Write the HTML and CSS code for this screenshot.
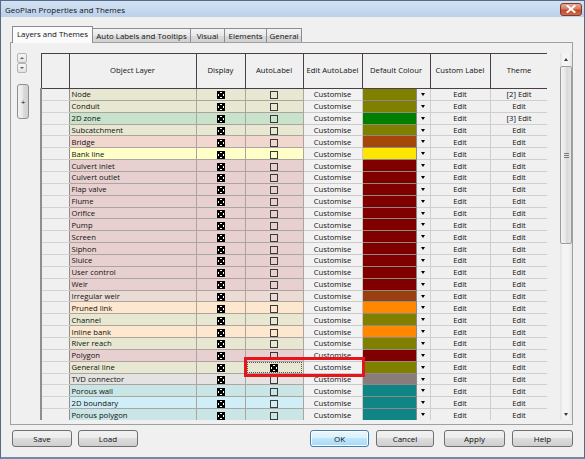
FILE: index.html
```html
<!DOCTYPE html>
<html>
<head>
<meta charset="utf-8">
<title>GeoPlan Properties and Themes</title>
<link rel="stylesheet" href="styles.css">
</head>
<body>
<div class="window">
  <div class="titlebar">
    <span class="title">GeoPlan Properties and Themes</span>
    <span class="close"><svg width="10" height="8" viewBox="0 0 10 8"><path d="M1.5 1 L8.5 7 M8.5 1 L1.5 7" stroke="#fff" stroke-width="2" stroke-linecap="square"/></svg></span>
  </div>
  <div class="tabs">
    <div class="tab active w1">Layers and Themes</div>
    <div class="tab w2">Auto Labels and Tooltips</div>
    <div class="tab w3">Visual</div>
    <div class="tab w4">Elements</div>
    <div class="tab w5">General</div>
  </div>
  <div class="panel">
    <div class="side">
      <div class="spin up"><i class="tri-up"></i></div>
      <div class="spin down"><i class="tri-down"></i></div>
      <div class="plus">+</div>
    </div>
    <div class="gridwrap">
      <div class="gridclip">
        <table class="grid">
          <colgroup>
            <col class="c-rh"><col class="c-nm"><col class="c-dp"><col class="c-al"><col class="c-cu"><col class="c-sw"><col class="c-dd"><col class="c-ed"><col class="c-th">
          </colgroup>
          <thead>
            <tr class="hd"><th></th><th>Object Layer</th><th>Display</th><th>AutoLabel</th><th>Edit AutoLabel</th><th colspan="2">Default Colour</th><th>Custom Label</th><th>Theme</th></tr>
          </thead>
          <tbody>
            <tr class="t-olive"><td class="rh"></td><td class="nm">Node</td><td class="ck"><i class="cb on"></i></td><td class="ck"><i class="cb"></i></td><td class="cu">Customise</td><td class="sw s-olive"></td><td class="dd"><i class="arr"></i></td><td class="ed">Edit</td><td class="ed">[2] Edit</td></tr>
            <tr class="t-olive"><td class="rh"></td><td class="nm">Conduit</td><td class="ck"><i class="cb on"></i></td><td class="ck"><i class="cb"></i></td><td class="cu">Customise</td><td class="sw s-olive"></td><td class="dd"><i class="arr"></i></td><td class="ed">Edit</td><td class="ed">Edit</td></tr>
            <tr class="t-green"><td class="rh"></td><td class="nm">2D zone</td><td class="ck"><i class="cb on"></i></td><td class="ck"><i class="cb"></i></td><td class="cu">Customise</td><td class="sw s-green"></td><td class="dd"><i class="arr"></i></td><td class="ed">Edit</td><td class="ed">[3] Edit</td></tr>
            <tr class="t-olive"><td class="rh"></td><td class="nm">Subcatchment</td><td class="ck"><i class="cb on"></i></td><td class="ck"><i class="cb"></i></td><td class="cu">Customise</td><td class="sw s-olive"></td><td class="dd"><i class="arr"></i></td><td class="ed">Edit</td><td class="ed">Edit</td></tr>
            <tr class="t-bridge"><td class="rh"></td><td class="nm">Bridge</td><td class="ck"><i class="cb on"></i></td><td class="ck"><i class="cb"></i></td><td class="cu">Customise</td><td class="sw s-brown"></td><td class="dd"><i class="arr"></i></td><td class="ed">Edit</td><td class="ed">Edit</td></tr>
            <tr class="t-yellow"><td class="rh"></td><td class="nm">Bank line</td><td class="ck"><i class="cb on"></i></td><td class="ck"><i class="cb"></i></td><td class="cu">Customise</td><td class="sw s-yellow"></td><td class="dd"><i class="arr"></i></td><td class="ed">Edit</td><td class="ed">Edit</td></tr>
            <tr class="t-red"><td class="rh"></td><td class="nm">Culvert inlet</td><td class="ck"><i class="cb on"></i></td><td class="ck"><i class="cb"></i></td><td class="cu">Customise</td><td class="sw s-maroon"></td><td class="dd"><i class="arr"></i></td><td class="ed">Edit</td><td class="ed">Edit</td></tr>
            <tr class="t-red"><td class="rh"></td><td class="nm">Culvert outlet</td><td class="ck"><i class="cb on"></i></td><td class="ck"><i class="cb"></i></td><td class="cu">Customise</td><td class="sw s-maroon"></td><td class="dd"><i class="arr"></i></td><td class="ed">Edit</td><td class="ed">Edit</td></tr>
            <tr class="t-red"><td class="rh"></td><td class="nm">Flap valve</td><td class="ck"><i class="cb on"></i></td><td class="ck"><i class="cb"></i></td><td class="cu">Customise</td><td class="sw s-maroon"></td><td class="dd"><i class="arr"></i></td><td class="ed">Edit</td><td class="ed">Edit</td></tr>
            <tr class="t-red"><td class="rh"></td><td class="nm">Flume</td><td class="ck"><i class="cb on"></i></td><td class="ck"><i class="cb"></i></td><td class="cu">Customise</td><td class="sw s-maroon"></td><td class="dd"><i class="arr"></i></td><td class="ed">Edit</td><td class="ed">Edit</td></tr>
            <tr class="t-red"><td class="rh"></td><td class="nm">Orifice</td><td class="ck"><i class="cb on"></i></td><td class="ck"><i class="cb"></i></td><td class="cu">Customise</td><td class="sw s-maroon"></td><td class="dd"><i class="arr"></i></td><td class="ed">Edit</td><td class="ed">Edit</td></tr>
            <tr class="t-red"><td class="rh"></td><td class="nm">Pump</td><td class="ck"><i class="cb on"></i></td><td class="ck"><i class="cb"></i></td><td class="cu">Customise</td><td class="sw s-maroon"></td><td class="dd"><i class="arr"></i></td><td class="ed">Edit</td><td class="ed">Edit</td></tr>
            <tr class="t-red"><td class="rh"></td><td class="nm">Screen</td><td class="ck"><i class="cb on"></i></td><td class="ck"><i class="cb"></i></td><td class="cu">Customise</td><td class="sw s-maroon"></td><td class="dd"><i class="arr"></i></td><td class="ed">Edit</td><td class="ed">Edit</td></tr>
            <tr class="t-red"><td class="rh"></td><td class="nm">Siphon</td><td class="ck"><i class="cb on"></i></td><td class="ck"><i class="cb"></i></td><td class="cu">Customise</td><td class="sw s-maroon"></td><td class="dd"><i class="arr"></i></td><td class="ed">Edit</td><td class="ed">Edit</td></tr>
            <tr class="t-red"><td class="rh"></td><td class="nm">Sluice</td><td class="ck"><i class="cb on"></i></td><td class="ck"><i class="cb"></i></td><td class="cu">Customise</td><td class="sw s-maroon"></td><td class="dd"><i class="arr"></i></td><td class="ed">Edit</td><td class="ed">Edit</td></tr>
            <tr class="t-red"><td class="rh"></td><td class="nm">User control</td><td class="ck"><i class="cb on"></i></td><td class="ck"><i class="cb"></i></td><td class="cu">Customise</td><td class="sw s-maroon"></td><td class="dd"><i class="arr"></i></td><td class="ed">Edit</td><td class="ed">Edit</td></tr>
            <tr class="t-red"><td class="rh"></td><td class="nm">Weir</td><td class="ck"><i class="cb on"></i></td><td class="ck"><i class="cb"></i></td><td class="cu">Customise</td><td class="sw s-maroon"></td><td class="dd"><i class="arr"></i></td><td class="ed">Edit</td><td class="ed">Edit</td></tr>
            <tr class="t-irr"><td class="rh"></td><td class="nm">Irregular weir</td><td class="ck"><i class="cb on"></i></td><td class="ck"><i class="cb"></i></td><td class="cu">Customise</td><td class="sw s-rust"></td><td class="dd"><i class="arr"></i></td><td class="ed">Edit</td><td class="ed">Edit</td></tr>
            <tr class="t-orange"><td class="rh"></td><td class="nm">Pruned link</td><td class="ck"><i class="cb on"></i></td><td class="ck"><i class="cb"></i></td><td class="cu">Customise</td><td class="sw s-orange"></td><td class="dd"><i class="arr"></i></td><td class="ed">Edit</td><td class="ed">Edit</td></tr>
            <tr class="t-olive"><td class="rh"></td><td class="nm">Channel</td><td class="ck"><i class="cb on"></i></td><td class="ck"><i class="cb"></i></td><td class="cu">Customise</td><td class="sw s-olive"></td><td class="dd"><i class="arr"></i></td><td class="ed">Edit</td><td class="ed">Edit</td></tr>
            <tr class="t-orange"><td class="rh"></td><td class="nm">Inline bank</td><td class="ck"><i class="cb on"></i></td><td class="ck"><i class="cb"></i></td><td class="cu">Customise</td><td class="sw s-orange"></td><td class="dd"><i class="arr"></i></td><td class="ed">Edit</td><td class="ed">Edit</td></tr>
            <tr class="t-olive"><td class="rh"></td><td class="nm">River reach</td><td class="ck"><i class="cb on"></i></td><td class="ck"><i class="cb"></i></td><td class="cu">Customise</td><td class="sw s-olive"></td><td class="dd"><i class="arr"></i></td><td class="ed">Edit</td><td class="ed">Edit</td></tr>
            <tr class="t-red"><td class="rh"></td><td class="nm">Polygon</td><td class="ck"><i class="cb on"></i></td><td class="ck"><i class="cb"></i></td><td class="cu">Customise</td><td class="sw s-maroon"></td><td class="dd"><i class="arr"></i></td><td class="ed">Edit</td><td class="ed">Edit</td></tr>
            <tr class="t-olive"><td class="rh"></td><td class="nm">General line</td><td class="ck"><i class="cb on"></i></td><td class="ck sel"><span class="focus"></span><i class="cb on"></i><span class="redbox"></span></td><td class="cu">Customise</td><td class="sw s-olive"></td><td class="dd"><i class="arr"></i></td><td class="ed">Edit</td><td class="ed">Edit</td></tr>
            <tr class="t-gray"><td class="rh"></td><td class="nm">TVD connector</td><td class="ck"><i class="cb on"></i></td><td class="ck"><i class="cb"></i></td><td class="cu">Customise</td><td class="sw s-mauve"></td><td class="dd"><i class="arr"></i></td><td class="ed">Edit</td><td class="ed">Edit</td></tr>
            <tr class="t-teal"><td class="rh"></td><td class="nm">Porous wall</td><td class="ck"><i class="cb on"></i></td><td class="ck"><i class="cb"></i></td><td class="cu">Customise</td><td class="sw s-teal"></td><td class="dd"><i class="arr"></i></td><td class="ed">Edit</td><td class="ed">Edit</td></tr>
            <tr class="t-cyan"><td class="rh"></td><td class="nm">2D boundary</td><td class="ck"><i class="cb on"></i></td><td class="ck"><i class="cb"></i></td><td class="cu">Customise</td><td class="sw s-teal"></td><td class="dd"><i class="arr"></i></td><td class="ed">Edit</td><td class="ed">Edit</td></tr>
            <tr class="t-teal"><td class="rh"></td><td class="nm">Porous polygon</td><td class="ck"><i class="cb on"></i></td><td class="ck"><i class="cb"></i></td><td class="cu">Customise</td><td class="sw s-teal"></td><td class="dd"><i class="arr"></i></td><td class="ed">Edit</td><td class="ed">Edit</td></tr>
          </tbody>
        </table>
      </div>
      <div class="vscroll">
        <div class="sarrow"><i class="tri-up dark"></i></div>
        <div class="thumb"><i class="grip"></i></div>
        <div class="strack"></div>
        <div class="sarrow"><i class="tri-down dark"></i></div>
      </div>
    </div>
  </div>
  <div class="buttons">
    <div class="btn b-save">Save</div>
    <div class="btn b-load">Load</div>
    <div class="spacer"></div>
    <div class="btn b-ok default">OK</div>
    <div class="btn b-cancel">Cancel</div>
    <div class="btn b-apply">Apply</div>
    <div class="btn b-help">Help</div>
  </div>
</div>
</body>
</html>
```
FILE: styles.css
```css
html, body { margin: 0; padding: 0; background: #ffffff; }
body { font-family: "Open Sans", "Noto Sans", sans-serif; color: #111; }

.window {
  width: 585px; height: 459px; box-sizing: border-box;
  border: 1px solid #566a84; border-bottom: 2px solid #6f8bab;
  background: #f0f0f0;
  display: flex; flex-direction: column; overflow: hidden;
}

.titlebar {
  height: 16px; flex: none;
  background: linear-gradient(#d3e2f4, #bad1ea);
  display: flex; align-items: center; justify-content: space-between;
  padding-left: 4px; padding-right: 2px;
  font-size: 8px;
}
.close {
  width: 22px; height: 13px; box-sizing: border-box;
  border: 1px solid #7b3b30; border-radius: 3px;
  background: linear-gradient(#e9a994 0%, #d77a62 45%, #c04a2f 55%, #d26a4a 100%);
  display: flex; align-items: center; justify-content: center;
}

.tabs {
  display: flex; align-items: flex-end;
  height: 16px; margin: 9px 0 0 11px;
  position: relative; z-index: 1;
}
.tab {
  height: 14px; box-sizing: border-box;
  border: 1px solid #898c95; border-bottom: none;
  margin-left: -1px;
  background: linear-gradient(#f3f3f3, #e8e8e8 50%, #dadada 50%, #d2d2d2);
  font-size: 7.9px;
  display: flex; align-items: center; justify-content: center;
  white-space: nowrap;
}
.tab.active {
  height: 17px; margin-bottom: -1px; margin-left: 0;
  background: #fbfbfb; position: relative; z-index: 2;
  padding-bottom: 2px;
}
.w1 { width: 81px; }
.w2 { width: 99px; }
.w3 { width: 35px; }
.w4 { width: 43px; }
.w5 { width: 36px; }

.panel {
  margin-left: 9px; width: 563px; height: 383px; box-sizing: border-box;
  border: 1px solid #a0a0a0;
  display: flex; padding: 10px 0 0 6px;
}

.side { width: 12px; display: flex; flex-direction: column; align-items: flex-start; }
.spin {
  width: 10px; height: 10px; box-sizing: border-box;
  border: 1px solid #b5b5b5; border-radius: 2px;
  background: linear-gradient(#f6f6f6, #e3e3e3);
  display: flex; align-items: center; justify-content: center;
}
.plus {
  width: 12px; height: 35px; margin-top: 11px; box-sizing: border-box;
  border: 1px solid #8e8f8f; border-radius: 3px;
  background: linear-gradient(90deg, #f2f2f2, #e8e8e8 50%, #dcdcdc 50%, #d0d0d0);
  font-size: 8px; line-height: 1;
  display: flex; align-items: center; justify-content: center;
}
.tri-up, .tri-down { display: block; width: 0; height: 0; border-left: 2px solid transparent; border-right: 2px solid transparent; }
.tri-up { border-bottom: 2px solid #4d6185; }
.tri-down { border-top: 2px solid #4d6185; }
.tri-up.dark { border-bottom-color: #3a3a3a; border-left-width: 2.5px; border-right-width: 2.5px; border-bottom-width: 3px; }
.tri-down.dark { border-top-color: #3a3a3a; border-left-width: 2.5px; border-right-width: 2.5px; border-top-width: 3px; }

.gridwrap { margin-left: 11px; height: 367px; display: flex; }
.gridclip { width: 507px; height: 367px; overflow: hidden; }

.grid {
  table-layout: fixed; border-collapse: collapse;
  width: 507px; font-size: 7.7px;
}
.c-rh { width: 28px; } .c-nm { width: 127px; } .c-dp { width: 49px; } .c-al { width: 58px; }
.c-cu { width: 59px; } .c-sw { width: 54px; } .c-dd { width: 14px; } .c-ed { width: 60px; } .c-th { width: 58px; }

.grid th {
  height: 32px; padding: 0 0 2px 0; font-weight: normal;
  background: #f0f0f0; border: 1px solid #4b3e4b;
  text-align: center; white-space: nowrap;
}
.grid tbody tr { height: 11.87px; }
.grid td {
  padding: 0; line-height: 10px; white-space: nowrap; overflow: hidden;
  border: 1px solid #aaa59f;
}
.grid td.rh { background: #f0f0f0; border-color: #d3d3d3; border-right-color: #8f8f8f; border-left: 2px solid #8f8f8f; }
.grid td.nm { padding-left: 2px; }
.grid td.ck { text-align: center; }
.grid td.cu { background: #f2f2f2; text-align: center; border-color: #c9c9c9; border-left-color: #9f9f9f; }
.grid td.dd { background: #f0f0f0; border-color: #cfcfcf; }
.grid td.ed { background: #f0f0f0; text-align: center; border-color: #cfcfcf; border-left-color: #aaaaaa; }
.grid td.sw { border-color: #8d8a86; }

.cb {
  display: inline-block; width: 8px; height: 8px; box-sizing: border-box;
  border: 1px solid #3a3a3a; vertical-align: middle;
}
.cb.on {
  border-color: #000;
  background:
    linear-gradient(45deg, transparent 38%, #000 38%, #000 62%, transparent 62%),
    linear-gradient(-45deg, transparent 38%, #000 38%, #000 62%, transparent 62%),
    #fff;
}
.arr { display: block; margin: 0 auto; width: 0; height: 0; border-left: 2.5px solid transparent; border-right: 2.5px solid transparent; border-top: 3px solid #000; }

.t-olive .nm, .t-olive .ck { background: #e7e7d2; }
.t-green .nm, .t-green .ck { background: #c8e2cc; }
.t-bridge .nm, .t-bridge .ck { background: #f2d7cf; }
.t-yellow .nm, .t-yellow .ck { background: #ffffc8; }
.t-red .nm, .t-red .ck { background: #e8d0d0; }
.t-irr .nm, .t-irr .ck { background: #ecdbd4; }
.t-orange .nm, .t-orange .ck { background: #fde7cf; }
.t-gray .nm, .t-gray .ck { background: #e5e3e1; }
.t-teal .nm, .t-teal .ck { background: #c9e5e5; }
.t-cyan .nm, .t-cyan .ck { background: #d0eef8; }

.s-olive { background: #808000; }
.s-green { background: #008000; }
.s-brown { background: #a44708; }
.s-yellow { background: #ffe600; }
.s-maroon { background: #800000; }
.s-rust { background: #9a4010; }
.s-orange { background: #ff8800; }
.s-mauve { background: #8a7c7a; }
.s-teal { background: #108585; }

.grid td.sel { position: relative; overflow: visible; }
.focus {
  position: absolute; left: 1px; right: 1px; top: 0; bottom: 0;
  border: 1px dotted #555;
}
.redbox {
  position: absolute; left: -2px; top: -5px; width: 121px; height: 20px;
  box-sizing: border-box; border: 3px solid #e8141c; z-index: 5;
}

.vscroll {
  width: 12px; margin-left: 13px; height: 367px;
  display: flex; flex-direction: column;
  background: linear-gradient(90deg, #e2e2e2, #f4f4f4 25%, #f4f4f4 75%, #e2e2e2);
}
.sarrow { height: 12px; flex: none; display: flex; align-items: center; justify-content: center; }
.thumb {
  height: 178px; margin-top: 1px; flex: none; box-sizing: border-box;
  border: 1px solid #9c9c9c; border-radius: 2px;
  background: linear-gradient(90deg, #f3f3f3, #e6e6e6 50%, #d8d8d8 50%, #e4e4e4);
  display: flex; align-items: center; justify-content: center;
}
.grip {
  display: block; width: 5px; height: 5px;
  background: repeating-linear-gradient(#7a7a7a 0 1px, transparent 1px 2px);
}
.strack { flex: 1; }

.buttons {
  display: flex; margin-top: 5px; height: 17px;
  padding: 0 11px 0 11px;
}
.spacer { flex: 1; }
.btn {
  height: 17px; box-sizing: border-box;
  border: 1px solid #707070; border-radius: 3px;
  background: linear-gradient(#f2f2f2, #ebebeb 50%, #dddddd 50%, #cfcfcf);
  font-size: 8px;
  display: flex; align-items: center; justify-content: center;
}
.btn.default {
  border-color: #3c7fb1;
  background: linear-gradient(#eaf6fd, #d9f0fc 50%, #bee6fd 50%, #a7d9f5);
  box-shadow: inset 0 0 0 1px #ffffff;
}
.b-save { width: 60px; }
.b-load { width: 60px; margin-left: 6px; }
.b-ok { width: 59px; }
.b-cancel { width: 58px; margin-left: 7px; }
.b-apply { width: 61px; margin-left: 10px; }
.b-help { width: 61px; margin-left: 7px; }
```
